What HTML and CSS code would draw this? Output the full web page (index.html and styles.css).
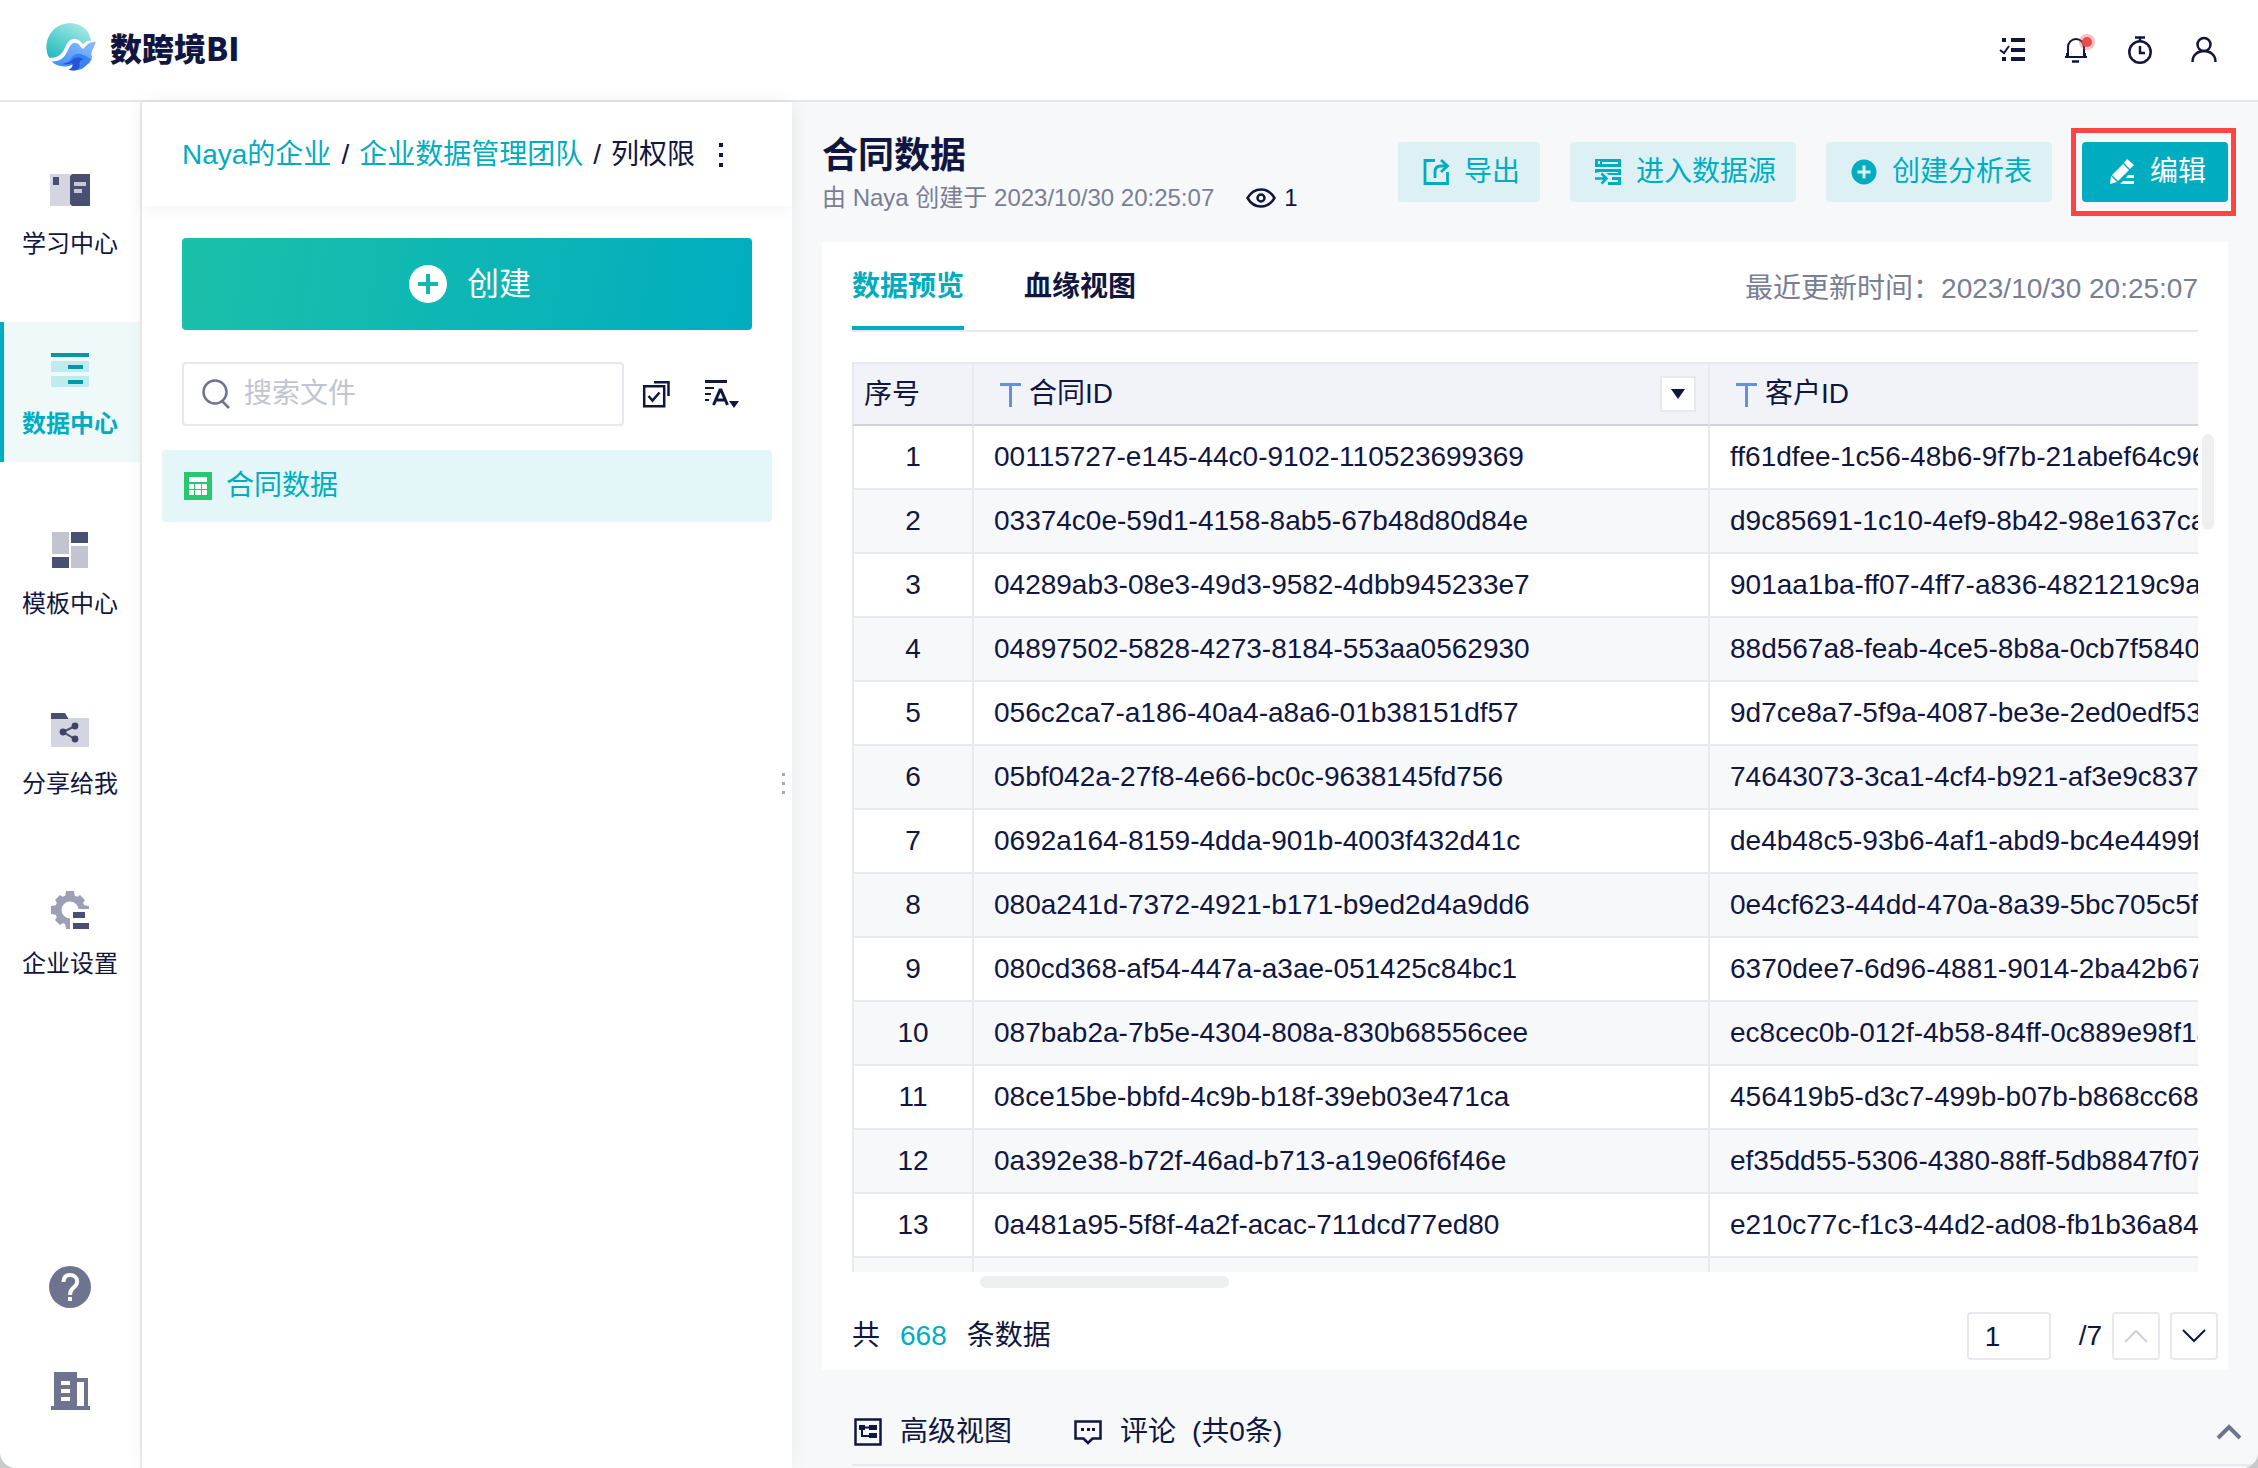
FILE: index.html
```html
<!DOCTYPE html>
<html lang="zh-CN">
<head>
  <meta charset="UTF-8">
  <meta name="viewport" content="width=device-width, initial-scale=1">
  <title>数跨境BI</title>
  <link rel="stylesheet" href="styles.css">
</head>
<body>
<div class="app">

  <header class="top-bar">
    <a class="logo" href="#">
      <svg width="50" height="48" viewBox="0 0 150 146" aria-hidden="true">
        <defs>
          <linearGradient id="globe" x1="0" y1="1" x2="0.8" y2="0">
            <stop offset="0" stop-color="#1cb9bb"/>
            <stop offset="1" stop-color="#a9e9e6"/>
          </linearGradient>
          <linearGradient id="wave" x1="0" y1="1" x2="1" y2="0">
            <stop offset="0" stop-color="#3f8df5"/>
            <stop offset="1" stop-color="#8fbcf9"/>
          </linearGradient>
        </defs>
        <path fill="url(#globe)" d="M9 106C-5 85-3 47 20 22 48-6 98-7 124 24c7 9 11 20 12 31-10-3-18 2-25 10-6-11-16-18-28-16-15 2-21 15-28 30-8 17-22 28-46 27z"/>
        <path fill="url(#wave)" d="M16 117c26 0 38-11 47-29 8-17 14-29 26-28 12 2 14 14 23 19 10-9 14-22 38-22-2 14-11 21-13 38 5 13-2 23-9 30-9-8-22-12-34-8-14 5-19 14-35 15-18 1-33-5-43-15z"/>
        <path fill="#3b82f6" d="M40 124c20 0 30-7 36-18 7-11 19-14 31-11 13 3 19 10 28 14-5 14-17 26-30 32-13 4-24 4-34 1 8-5 14-11 10-18-9 8-26 9-41 0z"/>
        <path fill="#2454d8" d="M52 122c13 0 22-4 28-11 9-8 23-8 34 0-11 0-14 7-13 14 1 7-1 13-7 17-8 3-18 3-26 0 10-6 15-12 9-21-7 5-17 5-25 1z"/>
      </svg>
      <span>数跨境BI</span>
    </a>
    <div class="top-icons">
      <button class="icon-btn" aria-label="任务">
        <svg width="28" height="28" viewBox="0 0 28 28" fill="currentColor"><path d="M4 2h4v4H4zM13 2h14v4H13zM13 12h14v4H13zM4 21h4v4H4zM13 21h14v4H13z"/><path d="M2 14l4 3 5-7" fill="none" stroke="currentColor" stroke-width="2"/></svg>
      </button>
      <button class="icon-btn bell" aria-label="消息">
        <svg width="28" height="28" viewBox="0 0 28 28" fill="none" stroke="currentColor" stroke-width="2"><path d="M3 21h22M6 21V11a8 8 0 0 1 16 0v10M5 17v4M23 17v4"/><path d="M10 25.500h7" stroke-width="2.500"/></svg>
      </button>
      <button class="icon-btn" aria-label="定时">
        <svg width="28" height="28" viewBox="0 0 28 28" fill="none" stroke="currentColor" stroke-width="2.500"><circle cx="14" cy="16" r="10.700"/><path d="M9 1.500h10M14 2v4M14 10v7h5"/></svg>
      </button>
      <button class="icon-btn" aria-label="用户">
        <svg width="28" height="28" viewBox="0 0 28 28" fill="none" stroke="currentColor" stroke-width="2.500"><circle cx="14" cy="8.500" r="6.500"/><path d="M2.500 26c0-7 5-11 11.500-11s11.500 4 11.500 11"/></svg>
      </button>
    </div>
  </header>

  <div class="body">
    <nav class="side-nav">
      <a class="nav-item" href="#">
        <svg width="40" height="40" viewBox="0 0 40 40"><path fill="#d3d6e0" d="M0 4h20v32H0z"/><path fill="#484f70" d="M3 7h6v8H3zM20 6l2-2h18v32H22l-2-2z"/><path fill="#c6c9d5" d="M24 12h12v4H24zM24 19h8v4h-8z"/></svg>
        <span>学习中心</span>
      </a>
      <a class="nav-item active" href="#">
        <svg width="40" height="40" viewBox="0 0 40 40"><path fill="#bfeaee" d="M1 11h38v11H1zM1 26h38v11H1z"/><path fill="#0097a9" d="M1 3h38v4H1zM18 15h15v4H18zM18 30h15v4H18z"/></svg>
        <span>数据中心</span>
      </a>
      <a class="nav-item" href="#">
        <svg width="40" height="40" viewBox="0 0 40 40"><path fill="#c2c5d0" d="M2 2h17v22H2zM21 16h17v22H21z"/><path fill="#484f70" d="M21 2h17v11H21zM2 27h17v11H2z"/></svg>
        <span>模板中心</span>
      </a>
      <a class="nav-item" href="#">
        <svg width="40" height="40" viewBox="0 0 40 40"><path fill="#d3d6e0" d="M1 8h38v29H1z"/><path fill="#484f70" d="M1 3h14l3 5v1H1z"/><path fill="none" stroke="#484f70" stroke-width="2" d="M25 16l-12 6 12 7"/><g fill="#3d4468"><circle cx="25" cy="16" r="3.400"/><circle cx="13" cy="22" r="3.400"/><circle cx="25" cy="29" r="3.400"/></g></svg>
        <span>分享给我</span>
      </a>
      <a class="nav-item" href="#">
        <svg width="40" height="40" viewBox="0 0 40 40"><g fill="#9da0b5"><circle cx="20" cy="20" r="15"/><path d="M16 1h8l1 6H15zM16 39h8l1-6H15zM1 16v8l6 1V15zM39 16v8l-6 1V15zM5 10l5-5 6 4-7 7zM35 10l-5-5-6 4 7 7zM5 30l5 5 6-4-7-7z"/></g><circle cx="20" cy="20" r="8.500" fill="#fff"/><path fill="#fff" d="M20 19h20v21H20z"/><path fill="#484f70" d="M23 22h12v6H23zM23 33h16v6H23z"/></svg>
        <span>企业设置</span>
      </a>
      <div class="nav-bottom">
        <button class="icon-btn" aria-label="帮助">
          <svg width="42" height="42" viewBox="0 0 42 42"><circle cx="21" cy="21" r="21" fill="#6e7490"/><path d="M14.500 16c0-5 3-7 6.700-7s7 2.500 7 6.500c0 6-7 6-7 12v1.500" fill="none" stroke="#fff" stroke-width="4"/><path d="M19 31h4v4h-4z" fill="#fff"/></svg>
        </button>
        <button class="icon-btn" aria-label="企业">
          <svg width="42" height="42" viewBox="0 0 42 42"><path fill="#6e7490" fill-rule="evenodd" d="M2 36h3V2h23v6h11v28h2v4H2zM12 11v4h9v-4zM12 19v4h9v-4zM12 27v4h9v-4zM28 12v24h7V12z"/></svg>
        </button>
      </div>
    </nav>

    <aside class="file-panel">
      <div class="breadcrumb">
        <a href="#">Naya的企业</a><span>/</span><a href="#">企业数据管理团队</a><span>/</span><b>列权限</b>
        <button class="more" aria-label="更多"><svg width="8" height="26" viewBox="0 0 8 26" fill="currentColor"><path d="M2 1h4v4H2zM2 11h4v4H2zM2 21h4v4H2z"/></svg></button>
      </div>
      <button class="create-btn">
        <svg width="38" height="38" viewBox="0 0 38 38"><circle cx="19" cy="19" r="19" fill="#fff"/><path d="M19 9v20M9 19h20" stroke="#12b9b4" stroke-width="4"/></svg>
        创建
      </button>
      <div class="search-row">
        <label class="search-box">
          <svg width="28" height="30" viewBox="0 0 28 30" fill="none" stroke="#6e7490" stroke-width="2.500"><circle cx="13" cy="13" r="11.500"/><path d="M20 22l7 7"/></svg>
          <input type="text" placeholder="搜索文件" aria-label="搜索文件">
        </label>
        <button class="icon-btn" aria-label="多选">
          <svg width="28" height="28" viewBox="0 0 28 28" fill="none" stroke="currentColor" stroke-width="2.500"><path d="M2.200 6.200h20v20h-20zM12 2.200h14.500V16M6.500 16l4 4.500 7-8"/></svg>
        </button>
        <button class="icon-btn" aria-label="排序">
          <svg width="36" height="28" viewBox="0 0 36 28" fill="currentColor"><path d="M1 0h22v3H1zM1 7h9v2H1zM1 13h6v2H1zM1 19h4v2H1zM25 21h10l-5 7z"/><path fill="none" stroke="currentColor" stroke-width="3" d="M9.500 25L16 10h1l6.500 15M12 20h9"/></svg>
        </button>
      </div>
      <a class="file-item" href="#">
        <svg width="28" height="28" viewBox="0 0 28 28"><path fill="#29c770" d="M0 0h28v28H0z"/><path fill="#fff" d="M5 5h18v5H5zM5 12h5v5H5zM11 12h6v5h-6zM18 12h5v5h-5zM5 18h5v5H5zM11 18h6v5h-6zM18 18h5v5h-5z"/></svg>
        合同数据
      </a>
      <div class="resizer"><i></i><i></i><i></i></div>
    </aside>

    <main class="content">
      <div class="page-head">
        <div class="page-title">
          <h1>合同数据</h1>
          <p>
            <span>由 Naya 创建于 2023/10/30 20:25:07</span>
            <svg width="30" height="24" viewBox="0 0 30 24" fill="none" stroke="currentColor" stroke-width="2.500"><path d="M1.500 12C5 6 9.500 3.500 15 3.500S25 6 28.500 12C25 18 20.500 20.500 15 20.500S5 18 1.500 12z"/><circle cx="15" cy="12" r="3.500"/></svg>
            <span class="views">1</span>
          </p>
        </div>
        <div class="actions">
          <button class="btn">
            <svg width="28" height="28" viewBox="0 0 28 28" fill="none" stroke="currentColor" stroke-width="2.800"><path d="M13 2.500H3v23h22.500V14"/><path d="M13 20v-6c0-4 2-6 6-6h6"/><path d="M19 2l6.500 6-6.500 6"/></svg>
            导出
          </button>
          <button class="btn">
            <svg width="28" height="28" viewBox="0 0 28 28" fill="currentColor"><path fill-rule="evenodd" d="M1 1h26v8H1zM4 3v3h2V3zM8 4v2h16V4z"/><path d="M1 11h26v6H15l-3-2h12v-1H6l-5 1zM27 19v8H14v-3h10v-2h-6v-3z"/><path fill="none" stroke="currentColor" stroke-width="2.500" d="M1 20.500h10M7.500 15.500l5 5-5 5"/></svg>
            进入数据源
          </button>
          <button class="btn">
            <svg width="28" height="28" viewBox="0 0 28 28"><circle cx="14" cy="14" r="12.500" fill="currentColor"/><path d="M14 7.500v13M7.500 14h13" stroke="#ddf1f5" stroke-width="3"/></svg>
            创建分析表
          </button>
          <div class="highlight">
            <button class="btn primary">
              <svg width="28" height="28" viewBox="0 0 28 28" fill="currentColor"><path d="M15 6l6 6L10 23l-6-6zM16 5l3-4 7 6-4 4zM3 18l6 6-7 2zM20 17h6v3h-8zM15 23h11v3H12z"/></svg>
              编辑
            </button>
          </div>
        </div>
      </div>

      <section class="card">
        <div class="tabs">
          <button class="tab active">数据预览</button>
          <button class="tab">血缘视图</button>
          <span class="update-time">最近更新时间：2023/10/30 20:25:07</span>
        </div>

        <div class="table-wrap">
          <div class="table-scroll">
            <table>
              <colgroup><col class="col-no"><col class="col-id"><col class="col-id"></colgroup>
              <thead>
                <tr>
                  <th class="no">序号</th>
                  <th>
                    <div class="th-inner">
                      <svg width="28" height="28" viewBox="0 0 28 28" fill="#6490dd"><path d="M4 3h21v3H4zM13 3h3v24h-3z"/></svg>
                      合同ID
                      <button class="filter" aria-label="筛选"><svg width="14" height="10" viewBox="0 0 14 10" fill="currentColor"><path d="M0 0h14L7 10z"/></svg></button>
                    </div>
                  </th>
                  <th>
                    <div class="th-inner">
                      <svg width="28" height="28" viewBox="0 0 28 28" fill="#6490dd"><path d="M4 3h21v3H4zM13 3h3v24h-3z"/></svg>
                      客户ID
                    </div>
                  </th>
                </tr>
              </thead>
              <tbody>
                <tr><td>1</td><td>00115727-e145-44c0-9102-110523699369</td><td>ff61dfee-1c56-48b6-9f7b-21abef64c96</td></tr>
                <tr><td>2</td><td>03374c0e-59d1-4158-8ab5-67b48d80d84e</td><td>d9c85691-1c10-4ef9-8b42-98e1637ca</td></tr>
                <tr><td>3</td><td>04289ab3-08e3-49d3-9582-4dbb945233e7</td><td>901aa1ba-ff07-4ff7-a836-4821219c9a</td></tr>
                <tr><td>4</td><td>04897502-5828-4273-8184-553aa0562930</td><td>88d567a8-feab-4ce5-8b8a-0cb7f5840</td></tr>
                <tr><td>5</td><td>056c2ca7-a186-40a4-a8a6-01b38151df57</td><td>9d7ce8a7-5f9a-4087-be3e-2ed0edf53</td></tr>
                <tr><td>6</td><td>05bf042a-27f8-4e66-bc0c-9638145fd756</td><td>74643073-3ca1-4cf4-b921-af3e9c837</td></tr>
                <tr><td>7</td><td>0692a164-8159-4dda-901b-4003f432d41c</td><td>de4b48c5-93b6-4af1-abd9-bc4e4499f</td></tr>
                <tr><td>8</td><td>080a241d-7372-4921-b171-b9ed2d4a9dd6</td><td>0e4cf623-44dd-470a-8a39-5bc705c5f</td></tr>
                <tr><td>9</td><td>080cd368-af54-447a-a3ae-051425c84bc1</td><td>6370dee7-6d96-4881-9014-2ba42b67</td></tr>
                <tr><td>10</td><td>087bab2a-7b5e-4304-808a-830b68556cee</td><td>ec8cec0b-012f-4b58-84ff-0c889e98f1a</td></tr>
                <tr><td>11</td><td>08ce15be-bbfd-4c9b-b18f-39eb03e471ca</td><td>456419b5-d3c7-499b-b07b-b868cc68</td></tr>
                <tr><td>12</td><td>0a392e38-b72f-46ad-b713-a19e06f6f46e</td><td>ef35dd55-5306-4380-88ff-5db8847f07</td></tr>
                <tr><td>13</td><td>0a481a95-5f8f-4a2f-acac-711dcd77ed80</td><td>e210c77c-f1c3-44d2-ad08-fb1b36a84</td></tr>
                <tr><td></td><td></td><td></td></tr>
              </tbody>
            </table>
          </div>
          <div class="scroll-y"></div>
          <div class="scroll-x"></div>
        </div>

        <div class="card-foot">
          <div class="total">共<em>668</em>条数据</div>
          <div class="pager">
            <input type="text" value="1" aria-label="页码">
            <span>/7</span>
            <button disabled aria-label="上一页"><svg width="24" height="14" viewBox="0 0 24 14" fill="none" stroke="currentColor" stroke-width="2"><path d="M1 13L12 2l11 11"/></svg></button>
            <button aria-label="下一页"><svg width="24" height="14" viewBox="0 0 24 14" fill="none" stroke="currentColor" stroke-width="2"><path d="M1 1l11 11L23 1"/></svg></button>
          </div>
        </div>
      </section>

      <footer class="bottom-bar">
        <button class="bottom-tab">
          <svg width="28" height="28" viewBox="0 0 28 28" fill="none" stroke="currentColor" stroke-width="2.500"><path d="M1.500 1.500h25v25h-25z"/><path d="M8 10v8h8M8 9.500h8" stroke-width="2"/><path fill="currentColor" stroke="none" d="M5 7h6v5H5zM15 7h8v5h-8zM15 15h8v5h-8z"/></svg>
          高级视图
        </button>
        <button class="bottom-tab">
          <svg width="28" height="28" viewBox="0 0 28 28" fill="none" stroke="currentColor" stroke-width="2.500"><path d="M1.500 3.500h25v17h-8L14 25l-4.500-4.500h-8z"/><path fill="currentColor" stroke="none" d="M7 10h3v3H7zM13 10h3v3h-3zM18 10h3v3h-3z"/></svg>
          评论<span>(共0条)</span>
        </button>
        <button class="expand" aria-label="展开"><svg width="26" height="16" viewBox="0 0 26 16" fill="none" stroke="currentColor" stroke-width="4"><path d="M2 14L13 3l11 11"/></svg></button>
      </footer>
    </main>
  </div>
</div>
</body>
</html>
```
FILE: styles.css
```css
* {
  box-sizing: border-box;
}
body {
  margin: 0;
  background: #c9cacd;
  color: #10163f;
  font-family: "Liberation Sans", "Noto Sans CJK SC", sans-serif;
  font-size: 28px;
  line-height: 40px;
}
a {
  color: inherit;
  text-decoration: none;
}
button, input {
  font: inherit;
  color: inherit;
  background: none;
  border: none;
  padding: 0;
  margin: 0;
}
button {
  cursor: pointer;
}
svg {
  display: block;
  flex: none;
}
.app {
  display: flex;
  flex-direction: column;
  height: 100vh;
  background: #fff;
  border-radius: 0 0 16px 16px;
  overflow: hidden;
}
.icon-btn {
  display: flex;
}

/* top bar */
.top-bar {
  display: flex;
  align-items: center;
  justify-content: space-between;
  flex: none;
  height: 102px;
  padding: 0 40px 0 46px;
  border-bottom: 2px solid #e5e6eb;
}
.logo {
  display: flex;
  align-items: center;
  gap: 14px;
  padding-bottom: 6px;
  font-family: "Noto Sans CJK SC", sans-serif;
  font-size: 32px;
  font-weight: 900;
}
.top-icons {
  display: flex;
  gap: 36px;
}
.bell {
  position: relative;
}
.bell::after {
  content: "";
  position: absolute;
  top: 1px;
  right: -2px;
  width: 10px;
  height: 10px;
  border-radius: 50%;
  background: #e84c4c;
  box-shadow: 0 0 0 3px rgba(232, 76, 76, 0.35);
}

.body {
  display: flex;
  flex: 1;
  min-height: 0;
}

/* left nav */
.side-nav {
  display: flex;
  flex-direction: column;
  gap: 40px;
  flex: none;
  width: 142px;
  padding: 40px 0 56px;
  border-right: 2px solid #ececee;
}
.nav-item {
  display: flex;
  flex-direction: column;
  align-items: center;
  gap: 16px;
  height: 140px;
  padding-top: 28px;
  font-size: 24px;
  line-height: 36px;
}
.nav-item.active {
  background: #eff9fa;
  box-shadow: inset 4px 0 #00adc0;
  color: #00adc0;
  font-weight: bold;
}
.nav-bottom {
  display: flex;
  flex-direction: column;
  align-items: center;
  gap: 62px;
  margin-top: auto;
}

/* file panel */
.file-panel {
  position: relative;
  z-index: 1;
  flex: none;
  width: 650px;
  box-shadow: 0 0 20px rgba(0, 0, 0, 0.05);
}
.breadcrumb {
  display: flex;
  align-items: center;
  gap: 10px;
  height: 104px;
  padding: 2px 40px 0;
  box-shadow: 0 6px 16px rgba(0, 0, 0, 0.04);
}
.breadcrumb a {
  color: #00adc0;
}
.breadcrumb b {
  font-weight: normal;
}
.more {
  margin-left: 12px;
}
.create-btn {
  display: flex;
  align-items: center;
  justify-content: center;
  gap: 20px;
  width: 570px;
  height: 92px;
  margin: 32px 40px;
  padding-left: 6px;
  border-radius: 4px;
  background: linear-gradient(100deg, #1bc0a9, #00adc0);
  color: #fff;
  font-size: 32px;
}
.search-row {
  display: flex;
  align-items: center;
  padding: 0 50px 0 40px;
}
.search-row .icon-btn {
  margin-left: 18px;
}
.search-row .icon-btn + .icon-btn {
  margin-left: 34px;
}
.search-box {
  display: flex;
  align-items: center;
  gap: 14px;
  flex: none;
  width: 442px;
  height: 64px;
  padding: 0 18px;
  border: 2px solid #e8e8ee;
  border-radius: 4px;
}
.search-box input {
  flex: 1;
  min-width: 0;
  outline: none;
}
.search-box input::placeholder {
  color: #c2c5d1;
}
.file-item {
  display: flex;
  align-items: center;
  gap: 14px;
  height: 72px;
  margin: 24px 20px;
  padding: 0 22px;
  border-radius: 4px;
  background: #e5f6f9;
  color: #00adc0;
}
.resizer {
  position: absolute;
  top: calc(50% - 12px);
  right: 7px;
  display: flex;
  flex-direction: column;
  gap: 6px;
}
.resizer i {
  width: 3px;
  height: 3px;
  background: #a7aab8;
}

/* content */
.content {
  display: flex;
  flex-direction: column;
  flex: 1;
  min-width: 0;
  padding-left: 30px;
  background: #f7f8fa;
}
.page-head {
  display: flex;
  align-items: center;
  justify-content: space-between;
  flex: none;
  height: 140px;
  padding-right: 30px;
}
.page-title {
  padding-top: 4px;
}
.page-title h1 {
  margin: 0;
  font-size: 36px;
  line-height: 48px;
}
.page-title p {
  display: flex;
  align-items: center;
  margin: 0;
  font-size: 24px;
  line-height: 36px;
}
.page-title p span:first-child {
  color: #797e95;
}
.page-title svg {
  margin: 0 8px 0 32px;
}
.actions {
  display: flex;
  gap: 30px;
}
.btn {
  display: flex;
  align-items: center;
  gap: 14px;
  height: 60px;
  padding: 0 20px 0 24px;
  border-radius: 4px;
  background: #ddf1f5;
  color: #00adc0;
}
.btn.primary {
  border: 2px solid #00adc0;
  background: #00adc0;
  color: #fff;
}
.highlight {
  position: relative;
}
.highlight::after {
  content: "";
  position: absolute;
  inset: -14px -8px -14px -11px;
  border: 5px solid #ff4444;
  pointer-events: none;
}

.card {
  display: flex;
  flex-direction: column;
  flex: 1;
  min-height: 0;
  margin-right: 30px;
  padding: 0 30px 10px;
  background: #fff;
}
.tabs {
  display: flex;
  align-items: stretch;
  gap: 60px;
  flex: none;
  height: 90px;
  border-bottom: 2px solid #e8e9ee;
}
.tab {
  padding-top: 6px;
  border-bottom: 4px solid transparent;
  font-weight: bold;
}
.tab.active {
  border-bottom-color: #00adc0;
  color: #00adc0;
}
.update-time {
  align-self: center;
  margin-left: auto;
  padding-top: 6px;
  color: #797e95;
}

/* table */
.table-wrap {
  position: relative;
  flex: 1;
  min-height: 0;
  margin-top: 30px;
}
.table-scroll {
  height: 100%;
  overflow: auto;
  scrollbar-width: none;
}
table {
  width: 1594px;
  table-layout: fixed;
  border-collapse: separate;
  border-spacing: 0;
}
.col-no {
  width: 122px;
}
.col-id {
  width: 736px;
}
th, td {
  height: 64px;
  padding: 0 20px;
  border-right: 2px solid #e8e9ee;
  border-bottom: 2px solid #e8e9ee;
  text-align: left;
  font-weight: normal;
  white-space: nowrap;
}
th {
  padding: 0 12px 0 22px;
  border-top: 2px solid #e8e9ee;
  border-bottom-color: #cfd2d9;
  background: #f2f3f8;
}
th.no {
  padding: 2px 10px 0;
}
th:first-child, td:first-child {
  border-left: 2px solid #e8e9ee;
}
td:first-child {
  padding: 0;
  text-align: center;
}
tbody tr:nth-child(even) {
  background: #f7f8fa;
}
.th-inner {
  display: flex;
  align-items: center;
  gap: 5px;
}
.filter {
  display: flex;
  align-items: center;
  justify-content: center;
  width: 36px;
  height: 36px;
  margin-left: auto;
  border: 2px solid #e8e9ee;
  background: #fff;
}
.scroll-y {
  position: absolute;
  top: 72px;
  right: -16px;
  width: 12px;
  height: 96px;
  border-radius: 6px;
  background: #eeeff1;
}
.scroll-x {
  position: absolute;
  bottom: -16px;
  left: 128px;
  width: 249px;
  height: 12px;
  border-radius: 6px;
  background: #eeeff1;
}

.card-foot {
  display: flex;
  align-items: center;
  justify-content: space-between;
  flex: none;
  margin: 40px -20px 0 0;
}
.total em {
  margin: 0 20px;
  color: #00adc0;
  font-style: normal;
}
.pager {
  display: flex;
  align-items: center;
  gap: 10px;
}
.pager input {
  width: 84px;
  height: 48px;
  margin-right: 18px;
  padding: 2px 16px 0;
  border: 2px solid #e8e9ee;
  border-radius: 4px;
}
.pager button {
  display: flex;
  align-items: center;
  justify-content: center;
  width: 48px;
  height: 48px;
  border: 2px solid #e8e9ee;
  border-radius: 4px;
}
.pager button:disabled {
  color: #cfd2db;
}

.bottom-bar {
  display: flex;
  align-items: center;
  gap: 62px;
  flex: none;
  height: 96px;
  margin: 0 0 2px 30px;
  padding: 30px 16px 0 2px;
  border-bottom: 2px solid #e8e9ee;
}
.bottom-tab {
  display: flex;
  align-items: center;
  gap: 18px;
}
.bottom-tab span {
  margin-left: -2px;
}
.expand {
  margin-left: auto;
  color: #6e7490;
}
```
